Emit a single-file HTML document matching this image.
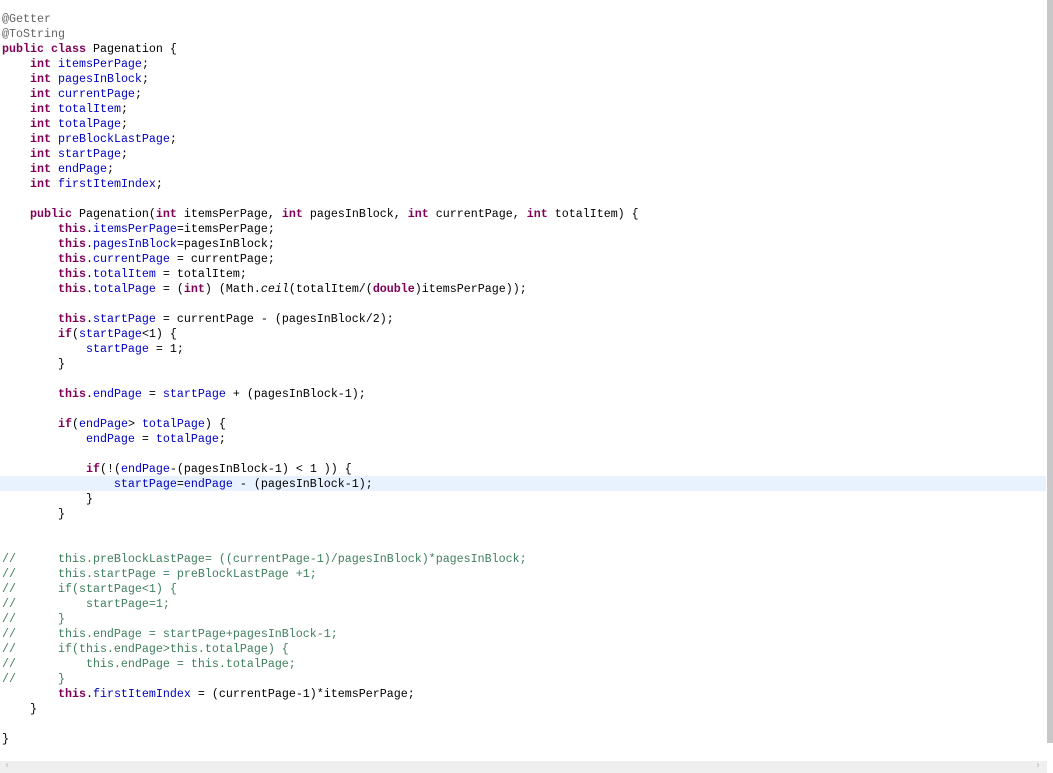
<!DOCTYPE html>
<html><head><meta charset="utf-8"><style>
html,body{margin:0;padding:0;width:1053px;height:773px;overflow:hidden;background:#fff;}
pre{position:absolute;left:2px;top:12px;margin:0;font-family:"Liberation Mono",monospace;font-size:11.67px;line-height:15px;tab-size:4;-moz-tab-size:4;color:#000;}
.k{color:#7f0055;font-weight:bold}
.f{color:#0000c0}
.a{color:#646464}
.c{color:#3f7f5f}
.i{font-style:italic}
#hl{position:absolute;left:0;top:476px;width:1046px;height:15px;background:#e8f2fe}
#vs{position:absolute;right:0;top:0;width:6px;height:743px;background:#c8c8c8}
#hs{position:absolute;left:0;top:761px;width:1047px;height:12px;background:#efefef}
.ar{position:absolute;top:760px;font:10px "DejaVu Sans",sans-serif;color:#bbb}
</style></head><body>
<div id="hl"></div>
<pre><span class="a">@Getter</span>
<span class="a">@ToString</span>
<span class="k">public</span> <span class="k">class</span> Pagenation {
	<span class="k">int</span> <span class="f">itemsPerPage</span>;
	<span class="k">int</span> <span class="f">pagesInBlock</span>;
	<span class="k">int</span> <span class="f">currentPage</span>;
	<span class="k">int</span> <span class="f">totalItem</span>;
	<span class="k">int</span> <span class="f">totalPage</span>;
	<span class="k">int</span> <span class="f">preBlockLastPage</span>;
	<span class="k">int</span> <span class="f">startPage</span>;
	<span class="k">int</span> <span class="f">endPage</span>;
	<span class="k">int</span> <span class="f">firstItemIndex</span>;

	<span class="k">public</span> Pagenation(<span class="k">int</span> itemsPerPage, <span class="k">int</span> pagesInBlock, <span class="k">int</span> currentPage, <span class="k">int</span> totalItem) {
		<span class="k">this</span>.<span class="f">itemsPerPage</span>=itemsPerPage;
		<span class="k">this</span>.<span class="f">pagesInBlock</span>=pagesInBlock;
		<span class="k">this</span>.<span class="f">currentPage</span> = currentPage;
		<span class="k">this</span>.<span class="f">totalItem</span> = totalItem;
		<span class="k">this</span>.<span class="f">totalPage</span> = (<span class="k">int</span>) (Math.<span class="i">ceil</span>(totalItem/(<span class="k">double</span>)itemsPerPage));

		<span class="k">this</span>.<span class="f">startPage</span> = currentPage - (pagesInBlock/2);
		<span class="k">if</span>(<span class="f">startPage</span>&lt;1) {
			<span class="f">startPage</span> = 1;
		}

		<span class="k">this</span>.<span class="f">endPage</span> = <span class="f">startPage</span> + (pagesInBlock-1);

		<span class="k">if</span>(<span class="f">endPage</span>&gt; <span class="f">totalPage</span>) {
			<span class="f">endPage</span> = <span class="f">totalPage</span>;

			<span class="k">if</span>(!(<span class="f">endPage</span>-(pagesInBlock-1) &lt; 1 )) {
				<span class="f">startPage</span>=<span class="f">endPage</span> - (pagesInBlock-1);
			}
		}


<span class="c">//		this.preBlockLastPage= ((currentPage-1)/pagesInBlock)*pagesInBlock;</span>
<span class="c">//		this.startPage = preBlockLastPage +1;</span>
<span class="c">//		if(startPage&lt;1) {</span>
<span class="c">//			startPage=1;</span>
<span class="c">//		}</span>
<span class="c">//		this.endPage = startPage+pagesInBlock-1;</span>
<span class="c">//		if(this.endPage&gt;this.totalPage) {</span>
<span class="c">//			this.endPage = this.totalPage;</span>
<span class="c">//		}</span>
		<span class="k">this</span>.<span class="f">firstItemIndex</span> = (currentPage-1)*itemsPerPage;
	}

}
</pre>
<div id="vs"></div>
<div id="hs"></div>
<div class="ar" style="left:5px">&#8249;</div>
<div class="ar" style="left:1036px">&#8250;</div>
</body></html>
